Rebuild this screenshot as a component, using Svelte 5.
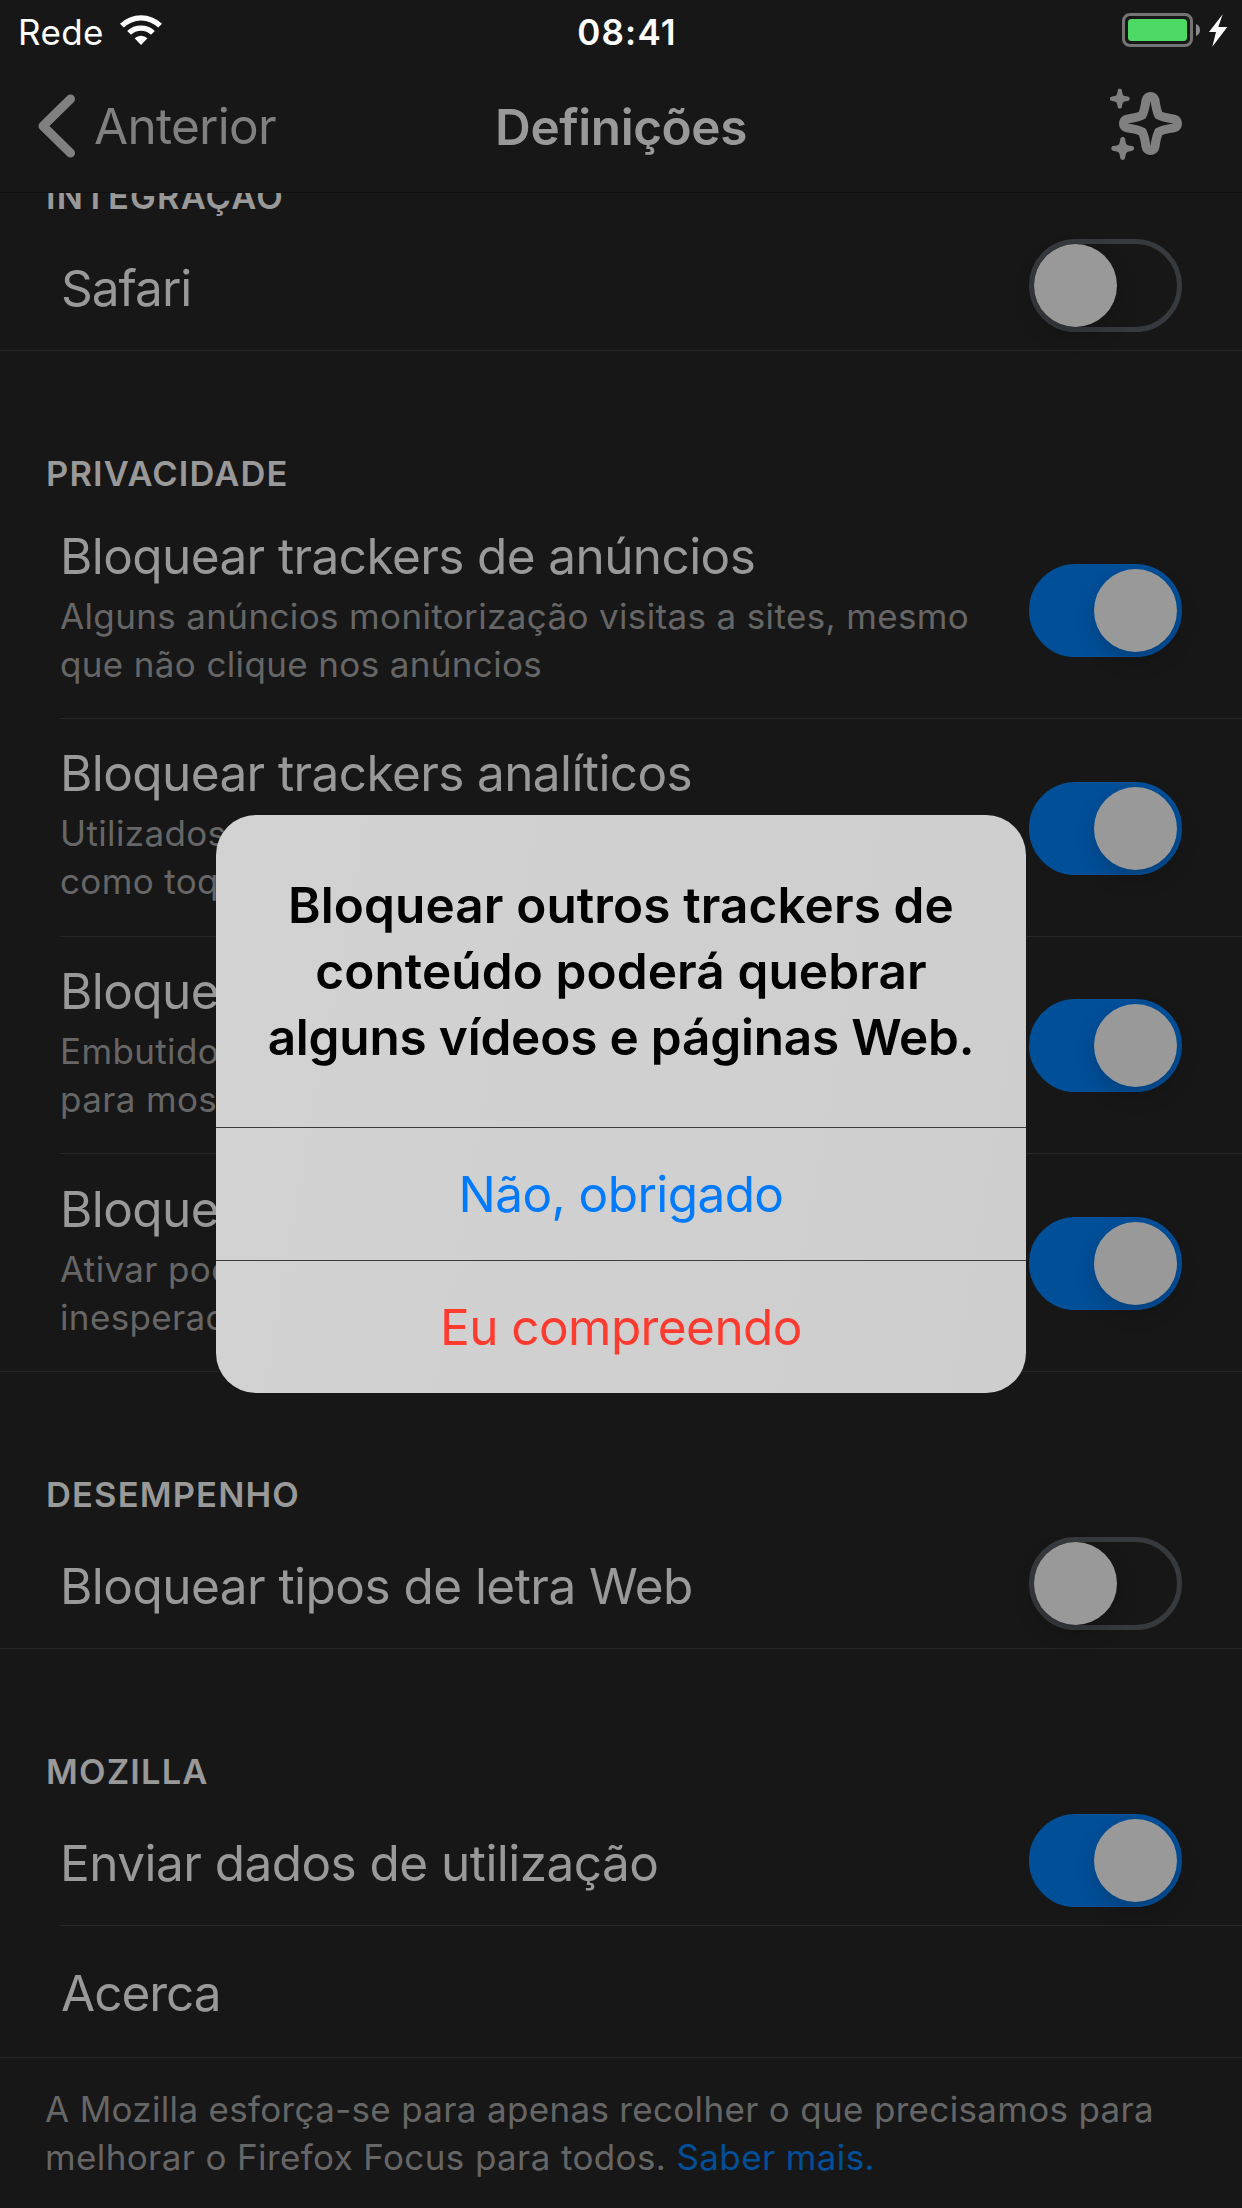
<script lang="ts">
  type Row = { title: string; lines?: string[]; on?: boolean; short?: boolean };
  type Group = { header: string; kind?: string; rows: Row[] };

  const groups: Group[] = [
    { header: 'INTEGRAÇÃO', kind: 'clipped', rows: [{ title: 'Safari', on: false, short: true }] },
    {
      header: 'PRIVACIDADE',
      kind: 'detailed',
      rows: [
        {
          title: 'Bloquear trackers de anúncios',
          lines: ['Alguns anúncios monitorização visitas a sites, mesmo', 'que não clique nos anúncios'],
          on: true
        },
        { title: 'Bloquear trackers analíticos', lines: ['Utilizados', 'como toques'], on: true },
        { title: 'Bloquear', lines: ['Embutidos', 'para mostrar'], on: true },
        { title: 'Bloquear', lines: ['Ativar pode', 'inesperado'], on: true }
      ]
    },
    { header: 'DESEMPENHO', rows: [{ title: 'Bloquear tipos de letra Web', on: false }] },
    {
      header: 'MOZILLA',
      rows: [{ title: 'Enviar dados de utilização', on: true }, { title: 'Acerca', short: true }]
    }
  ];

  const message = ['Bloquear outros trackers de', 'conteúdo poderá quebrar', 'alguns vídeos e páginas Web.'];
</script>

<div class="screen">
  <div class="status">
    <div class="side">
      <span class="carrier">Rede</span>
      <svg class="wifi" width="44" height="32" viewBox="0 0 44 32">
        <path d="M1 9.8A30 30 0 0 1 43 9.8L39.2 13.6A24.5 24.5 0 0 0 4.8 13.6Z" />
        <path d="M8.2 17A19.8 19.8 0 0 1 35.8 17L32 20.8A14.3 14.3 0 0 0 12 20.8Z" />
        <path d="M15.6 24.3A9.2 9.2 0 0 1 28.4 24.3L22 31Z" />
      </svg>
    </div>
    <span class="time">08:41</span>
    <div class="side end">
      <svg width="106" height="36" viewBox="0 0 106 36">
        <rect x="1.5" y="2.5" width="68" height="31" rx="6.5" fill="none" stroke="#747474" stroke-width="3" />
        <rect x="6" y="7" width="59" height="22" rx="3.5" fill="#4cd964" />
        <path d="M74 12C79.300 13.500 79.300 22.500 74 24Z" fill="#8b8b8b" />
        <path d="M100.700 2.300L96.300 15H105.300L90.300 34.700L94 20H87Z" fill="#fff" />
      </svg>
    </div>
  </div>

  <div class="nav">
    <div class="side back">
      <svg width="42" height="68" viewBox="36 92.500 42 68">
        <path d="M70.500 99.500L43 126.500L70.500 153.500" fill="none" stroke="#808080" stroke-width="9" stroke-linecap="round" stroke-linejoin="round" />
      </svg>
      <span>Anterior</span>
    </div>
    <h1>Definições</h1>
    <div class="side end">
      <svg width="76" height="80" viewBox="1108 86 76 80">
        <g transform="translate(1150.500 123.500)">
          <path
            d="M-4.400 -23.500A4.500 4.500 0 0 1 4.400 -23.500C5.500 -16 6.500 -11.500 8.300 -8.300C11.500 -6.500 16 -5.500 23.500 -4.400A4.500 4.500 0 0 1 23.500 4.400C16 5.500 11.500 6.500 8.300 8.300C6.500 11.500 5.500 16 4.400 23.500A4.500 4.500 0 0 1 -4.400 23.500C-5.500 16 -6.500 11.500 -8.300 8.300C-11.500 6.500 -16 5.500 -23.500 4.400A4.500 4.500 0 0 1 -23.500 -4.400C-16 -5.500 -11.500 -6.500 -8.300 -8.300C-6.500 -11.500 -5.500 -16 -4.400 -23.500Z"
            fill="none"
            stroke="#808080"
            stroke-width="9"
          />
        </g>
        {#each [{ x: 1119.8, y: 98.7, s: 1 }, { x: 1122.7, y: 148.4, s: 1.15 }] as star}
          <path
            transform="translate({star.x} {star.y}) scale({star.s})"
            fill="#808080"
            d="M-2 -8.500C-1.700 -10.300 1.700 -10.300 2 -8.500C2.600 -5.500 2.800 -4.200 3.500 -3.500C4.200 -2.800 5.500 -2.600 8.500 -2C10.300 -1.700 10.300 1.700 8.500 2C5.500 2.600 4.200 2.800 3.500 3.500C2.800 4.200 2.600 5.500 2 8.500C1.700 10.300 -1.700 10.300 -2 8.500C-2.600 5.500 -2.800 4.200 -3.500 3.500C-4.200 2.800 -5.500 2.600 -8.500 2C-10.300 1.700 -10.300 -1.700 -8.500 -2C-5.500 -2.600 -4.200 -2.800 -3.500 -3.500C-2.800 -4.200 -2.600 -5.500 -2 -8.500Z"
          />
        {/each}
      </svg>
    </div>
  </div>

  <main>
    {#each groups as group}
      <section class={group.kind ?? ''}>
        <h2>{group.header}</h2>
        <div class="rows">
          {#each group.rows as row}
            <div class="row" class:plain={row.on === undefined}>
              <div class="label">
                <span class="title" class:short={row.short}>{row.title}</span>
                {#if row.lines}
                  <p class="detail">{#each row.lines as line}<span>{line}</span>{/each}</p>
                {/if}
              </div>
              {#if row.on !== undefined}
                <div class="toggle" class:on={row.on}><i></i></div>
              {/if}
            </div>
          {/each}
        </div>
      </section>
    {/each}
    <p class="footer">
      <span>A Mozilla esforça-se para apenas recolher o que precisamos para</span>
      <span class="last">melhorar o Firefox Focus para todos. <a href="#saber">Saber mais.</a></span>
    </p>
  </main>

  <div class="overlay">
    <div class="alert" role="alertdialog">
      <div class="message">{#each message as line}<span>{line}</span>{/each}</div>
      <button class="cancel">Não, obrigado</button>
      <button class="confirm">Eu compreendo</button>
    </div>
  </div>
</div>

<style>
  :global(body) {
    background: #171717;
  }
  .screen {
    position: relative;
    display: flex;
    flex-direction: column;
    width: 1242px;
    height: 2208px;
    overflow: hidden;
    background: #171717;
    color: #999;
    font-family: Inter, 'Liberation Sans', sans-serif;
    font-size: 49.5px;
  }
  h1,
  h2,
  p {
    margin: 0;
  }
  svg {
    display: block;
    flex: none;
  }
  .side {
    display: flex;
    flex: 1;
    align-items: center;
  }
  .end {
    justify-content: flex-end;
  }

  .status {
    display: flex;
    flex: none;
    align-items: center;
    height: 60px;
    padding: 0 14px 0 18px;
    color: #fff;
    font-size: 35px;
    line-height: 60px;
  }
  .carrier {
    padding-top: 3px;
    letter-spacing: 0.4px;
  }
  .wifi {
    margin-left: 15px;
    fill: #fff;
  }
  .time {
    margin-left: 8px;
    padding-top: 3px;
    font-weight: 600;
    letter-spacing: 1.15px;
  }

  .nav {
    display: flex;
    flex: none;
    align-items: center;
    height: 132px;
    padding: 0 58px 0 36px;
    border-bottom: 1px solid #101010;
  }
  .back {
    gap: 16px;
    color: #808080;
    letter-spacing: -0.72px;
    line-height: 132px;
  }
  h1 {
    margin-left: 22px;
    padding-top: 2px;
    font-size: 49.5px;
    font-weight: 600;
    letter-spacing: -0.44px;
    line-height: 130px;
  }

  main {
    flex: 1;
    overflow: hidden;
  }
  h2 {
    display: flex;
    align-items: flex-end;
    box-sizing: border-box;
    height: 148px;
    padding: 0 46px 5.5px;
    font-size: 34.5px;
    font-weight: 600;
    letter-spacing: 1.15px;
    line-height: 40px;
  }
  .clipped h2 {
    height: 29px;
  }
  .detailed .rows {
    padding-top: 2px;
  }
  .row {
    position: relative;
    display: flex;
    align-items: center;
    box-sizing: border-box;
    height: 129px;
    padding: 0 60px;
    border-bottom: 1px solid #272727;
  }
  .row:not(:last-child) {
    border-bottom-color: transparent;
  }
  .row:not(:last-child)::after {
    content: '';
    position: absolute;
    right: 0;
    bottom: -1px;
    left: 60px;
    height: 1px;
    background: #272727;
  }
  .row.plain {
    height: 132px;
  }
  .detailed .row {
    align-items: center;
    height: 217.75px;
  }
  .label {
    flex: 1;
    padding-top: 3.5px;
    white-space: nowrap;
  }
  .detailed .label {
    align-self: flex-start;
    padding-top: 24.5px;
  }
  .title {
    display: block;
    letter-spacing: -0.54px;
    line-height: 60px;
  }
  .detailed .title {
    letter-spacing: -0.6px;
  }
  .short {
    padding-left: 1px;
    letter-spacing: -1px;
  }
  .detail {
    margin-top: 6px;
    color: #666;
    font-size: 35px;
    letter-spacing: 0.36px;
    line-height: 48px;
  }
  .detail span,
  .footer span,
  .message span {
    display: block;
  }

  .toggle {
    display: flex;
    flex: none;
    box-sizing: border-box;
    width: 153px;
    height: 93px;
    margin-bottom: 1px;
    border: 5px solid #36393e;
    border-radius: 47px;
  }
  .detailed .toggle {
    margin: 2px 0 0;
  }
  .toggle i {
    width: 83px;
    height: 83px;
    border-radius: 50%;
    background: #999;
    box-shadow: 0 9px 20px rgba(0, 0, 0, 0.18);
  }
  .toggle.on {
    justify-content: flex-end;
    border-color: #004f99;
    background: #004f99;
  }

  .footer {
    padding: 27px 45px 0;
    color: #666;
    font-size: 35px;
    letter-spacing: 0.32px;
    line-height: 48px;
    white-space: nowrap;
  }
  .last {
    letter-spacing: 0.38px;
  }
  a {
    color: #004f99;
    text-decoration: none;
  }

  .overlay {
    position: absolute;
    inset: 0;
    display: flex;
    align-items: center;
    justify-content: center;
  }
  .alert {
    width: 810px;
    height: 578px;
    overflow: hidden;
    border-radius: 40px;
    background: linear-gradient(100deg, #d2d2d2, #cecece);
    color: #000;
    text-align: center;
  }
  .message {
    box-sizing: border-box;
    height: 312px;
    padding-top: 57px;
    font-weight: 600;
    line-height: 66px;
    white-space: nowrap;
  }
  .message span {
    letter-spacing: 0.1px;
  }
  .message span:last-child {
    letter-spacing: -0.2px;
  }
  button {
    display: block;
    width: 100%;
    height: 133px;
    padding: 1px 0 0;
    border: 0;
    border-top: 1px solid #3c3a3f;
    background: none;
    font: inherit;
    letter-spacing: -0.58px;
    line-height: 131px;
  }
  .cancel {
    color: #007aff;
  }
  .confirm {
    color: #ff3b30;
  }
</style>
